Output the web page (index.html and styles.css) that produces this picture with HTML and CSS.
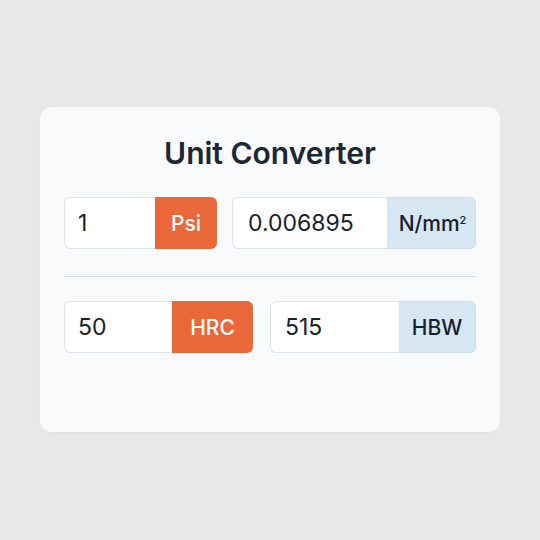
FILE: index.html
```html
<!DOCTYPE html>
<html>
<head>
<meta charset="utf-8">
<link rel="stylesheet" href="styles.css">
</head>
<body>
<main class="card">
  <h1 class="title">Unit Converter</h1>
  <div class="row">
    <div class="group g1">
      <div class="field f1">1</div>
      <div class="tag tag-orange t1">Psi</div>
    </div>
    <div class="group g2">
      <div class="field f2">0.006895</div>
      <div class="tag tag-blue t2">N/mm<span class="sup">2</span></div>
    </div>
  </div>
  <hr class="divider">
  <div class="row row2">
    <div class="group g3">
      <div class="field f3">50</div>
      <div class="tag tag-orange t3">HRC</div>
    </div>
    <div class="group g4">
      <div class="field f4">515</div>
      <div class="tag tag-blue t4">HBW</div>
    </div>
  </div>
</main>
</body>
</html>
```

FILE: styles.css
```css
* { box-sizing: border-box; }
html, body {
  margin: 0;
  padding: 0;
  background: #e8e8e8;
  font-family: Inter, "Liberation Sans", sans-serif;
}
body {
  width: 540px;
  height: 540px;
  padding-top: 107px;
}
.card {
  margin-left: 40px;
  width: 460px;
  height: 325px;
  background: #f9fafb;
  border-radius: 12px;
  padding: 28px 24px 0 24px;
  box-shadow: 0 1px 2px rgba(0,0,0,0.03);
}
.title {
  margin: 0 0 26px 0;
  height: 36px;
  line-height: 36px;
  text-align: center;
  font-size: 30px;
  font-weight: 600;
  color: #1b2733;
}
.row {
  display: flex;
  height: 52px;
}
.group {
  display: flex;
  height: 52px;
}
.g1 { width: 153px; }
.g2 { width: 244px; margin-left: 15px; }
.g3 { width: 189px; }
.g4 { width: 206px; margin-left: 17px; }
.field {
  height: 52px;
  background: #ffffff;
  border: 1px solid #dde4eb;
  border-right: none;
  border-radius: 6px 0 0 6px;
  display: flex;
  align-items: center;
  padding-left: 13px;
  font-size: 23px;
  color: #17212b;
}
.f1 { width: 91px; }
.f2 { width: 155px; padding-left: 15px; }
.f3 { width: 108px; }
.f4 { width: 129px; padding-left: 14px; }
.tag {
  height: 52px;
  display: flex;
  align-items: center;
  justify-content: center;
  font-size: 21px;
  font-weight: 500;
  border-radius: 0 6px 6px 0;
}
.tag-orange {
  background: #ea673a;
  color: #ffffff;
}
.tag-blue {
  background: #d6e6f3;
  color: #17212b;
  border: 1px solid #d0dfec;
  border-left: none;
}
.t2 { font-size: 21px; padding-left: 3px; }
.sup {
  font-size: 11px;
  align-self: flex-start;
  margin-top: 15px;
}
.t1 { width: 62px; }
.t2 { width: 89px; }
.t3 { width: 81px; }
.t4 { width: 77px; }
.divider {
  margin: 27px 0 24px 0;
  border: none;
  height: 1px;
  background: #d5e0ea;
}
```
